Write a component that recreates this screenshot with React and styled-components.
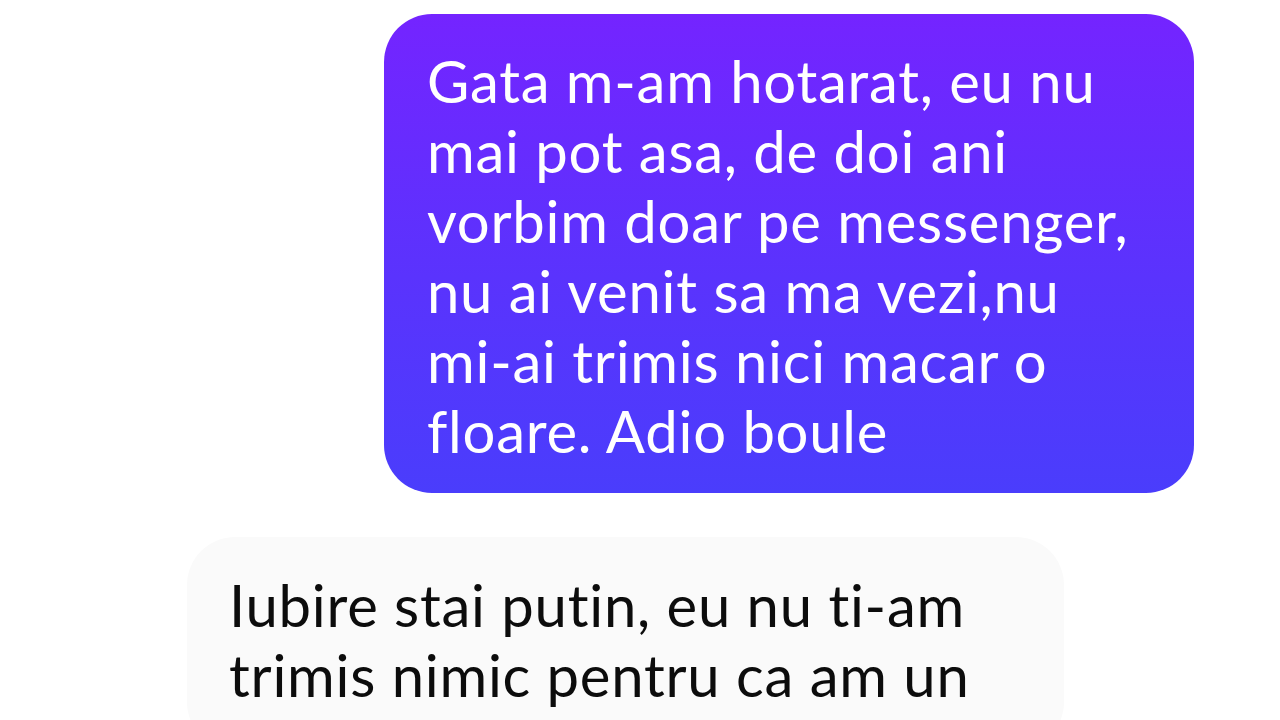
import styled, { createGlobalStyle } from 'styled-components';

const GlobalStyle = createGlobalStyle`
  html, body {
    margin: 0;
    padding: 0;
    background: #ffffff;
  }
  body {
    width: 1280px;
    height: 720px;
    overflow: hidden;
    font-family: 'Lato', 'Noto Sans', sans-serif;
  }
`;

const Chat = styled.div`
  display: flex;
  flex-direction: column;
  padding-top: 14px;
  gap: 44px;
`;

const Bubble = styled.div`
  box-sizing: border-box;
  width: ${({ $mine }) => ($mine ? '810px' : '877px')};
  align-self: ${({ $mine }) => ($mine ? 'flex-end' : 'flex-start')};
  margin: ${({ $mine }) => ($mine ? '0 86px 0 0' : '0 0 0 187px')};
  padding: ${({ $mine }) => ($mine ? '32px 20px 27px 43px' : '33px 20px 40px 42px')};
  border-radius: 48px;
  background: ${({ $mine }) =>
    $mine ? 'linear-gradient(180deg, #7424ff 0%, #5a33fd 55%, #4a3dfc 100%)' : '#fafafa'};
  color: ${({ $mine }) => ($mine ? '#ffffff' : '#0c0c0c')};
  font-size: 58px;
  line-height: 70px;
  letter-spacing: 0.75px;
`;

const Line = styled.div`
  white-space: nowrap;
`;

const sent = [
  'Gata m-am hotarat, eu nu',
  'mai pot asa, de doi ani',
  'vorbim doar pe messenger,',
  'nu ai venit sa ma vezi,nu',
  'mi-ai trimis nici macar o',
  'floare. Adio boule',
];

const received = [
  'Iubire stai putin, eu nu ti-am',
  'trimis nimic pentru ca am un',
];

export default function App() {
  return (
    <>
      <GlobalStyle />
      <Chat>
        <Bubble $mine>
          {sent.map((line) => (
            <Line key={line}>{line}</Line>
          ))}
        </Bubble>
        <Bubble>
          {received.map((line) => (
            <Line key={line}>{line}</Line>
          ))}
        </Bubble>
      </Chat>
    </>
  );
}
